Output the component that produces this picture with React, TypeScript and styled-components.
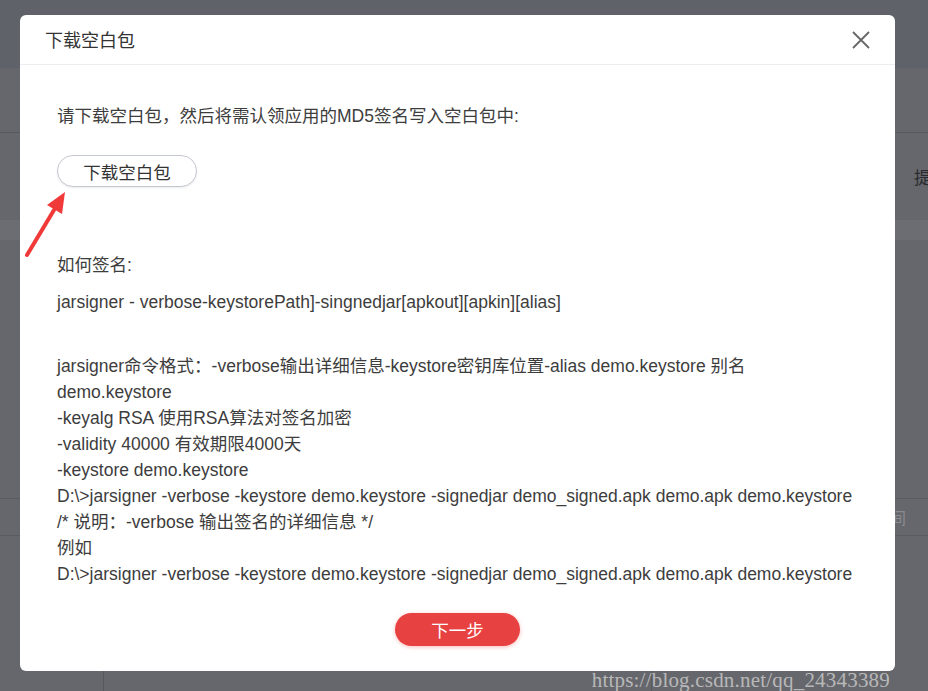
import React from "react";
import styled, { createGlobalStyle } from "styled-components";

const GlobalStyle = createGlobalStyle`
  html, body {
    margin: 0;
    padding: 0;
    width: 928px;
    height: 691px;
    overflow: hidden;
    background: #66676c;
    font-family: "Liberation Sans", "Noto Sans CJK SC", sans-serif;
  }
`;

const Page = styled.div`
  position: relative;
  width: 928px;
  height: 691px;
  display: flex;
  flex-direction: column;
  background: #66676c;
  overflow: hidden;
`;

const TopBand = styled.div`
  height: 68px;
  background: #60626a;
`;

const SubBar = styled.div`
  height: 64px;
  border-bottom: 1px solid #58595d;
`;

const ToolRow = styled.div`
  height: 87px;
  display: flex;
  justify-content: flex-end;
  align-items: center;
  font-size: 17px;
  color: #2a2b2e;
`;

const ToolText = styled.span`
  width: 14px;
  overflow: hidden;
  white-space: nowrap;
`;

const Band = styled.div`
  height: 20px;
  background: #6b6d73;
`;

const Spacer = styled.div`
  height: 258px;
`;

const HeadRow = styled.div`
  height: 36px;
  border-top: 1px solid #5a5b5f;
  border-bottom: 1px solid #5a5b5f;
  display: flex;
  justify-content: flex-end;
  align-items: center;
  font-size: 16px;
  color: #8a8b8f;
  padding-right: 22px;
`;

const BottomRow = styled.div`
  flex: 1;
  display: flex;
`;

const BottomCell = styled.div<{ $w: number }>`
  width: ${(p) => p.$w}px;
  border-right: 1px solid #58595d;
`;

const Modal = styled.div`
  position: absolute;
  left: 20px;
  top: 15px;
  width: 875px;
  height: 656px;
  background: #fff;
  border-radius: 6px;
  display: flex;
  flex-direction: column;
  color: #333;
`;

const Header = styled.div`
  height: 49px;
  border-bottom: 1px solid #ebedf0;
  display: flex;
  align-items: center;
  justify-content: space-between;
  padding: 0 24px 0 25px;
`;

const Title = styled.div`
  font-size: 18px;
  color: #333;
  margin-top: -2px;
`;

const Close = styled.button`
  border: none;
  background: none;
  padding: 0;
  width: 20px;
  height: 20px;
  display: flex;
  align-items: center;
  justify-content: center;
  cursor: pointer;
`;

const Body = styled.div`
  flex: 1;
  display: flex;
  flex-direction: column;
  align-items: flex-start;
  padding: 38px 37px 25px;
  font-size: 17.5px;
  line-height: 26px;
  color: #3d3d3d;
`;

const Line = styled.div<{ $mt?: number }>`
  margin-top: ${(p) => p.$mt ?? 0}px;
  white-space: nowrap;
`;

const GhostButton = styled.button`
  margin-top: 26px;
  width: 140px;
  height: 32px;
  border-radius: 16px;
  border: 1px solid #c4c8d0;
  background: #fff;
  font-family: inherit;
  font-size: 17.5px;
  color: #333;
  box-shadow: 0 1px 2px rgba(0, 0, 0, 0.08);
  cursor: pointer;
`;

const Footer = styled.div`
  align-self: stretch;
  display: flex;
  justify-content: center;
  margin-top: 26px;
`;

const PrimaryButton = styled.button`
  width: 125px;
  height: 33px;
  border-radius: 17px;
  border: none;
  background: #e84141;
  color: #fff;
  font-family: inherit;
  font-size: 17.5px;
  box-shadow: 0 1px 4px rgba(232, 65, 65, 0.35);
  cursor: pointer;
`;

const Arrow = styled.svg`
  position: absolute;
  left: 22px;
  top: 188px;
`;

const Watermark = styled.div`
  position: absolute;
  right: 38px;
  bottom: 0px;
  font-family: "Liberation Serif", "DejaVu Serif", serif;
  font-size: 21px;
  letter-spacing: 0.2px;
  color: rgba(200, 200, 200, 0.85);
  line-height: 22px;
`;

const commandLines = [
  "jarsigner命令格式：-verbose输出详细信息-keystore密钥库位置-alias demo.keystore 别名",
  "demo.keystore",
  "-keyalg RSA 使用RSA算法对签名加密",
  "-validity 40000 有效期限4000天",
  "-keystore demo.keystore",
  "D:\\>jarsigner -verbose -keystore demo.keystore -signedjar demo_signed.apk demo.apk demo.keystore",
  "/* 说明：-verbose 输出签名的详细信息 */",
  "例如",
  "D:\\>jarsigner -verbose -keystore demo.keystore -signedjar demo_signed.apk demo.apk demo.keystore",
];

export default function App() {
  return (
    <>
      <GlobalStyle />
      <Page>
        <TopBand />
        <SubBar />
        <ToolRow>
          <ToolText>提</ToolText>
        </ToolRow>
        <Band />
        <Spacer />
        <HeadRow>时间</HeadRow>
        <BottomRow>
          <BottomCell $w={103} />
          <BottomCell $w={547} />
        </BottomRow>

        <Modal>
          <Header>
            <Title>下载空白包</Title>
            <Close aria-label="close">
              <svg width="18" height="18" viewBox="0 0 18 18">
                <path d="M1 1L17 17M17 1L1 17" stroke="#666" strokeWidth="1.8" />
              </svg>
            </Close>
          </Header>
          <Body>
            <Line>请下载空白包，然后将需认领应用的MD5签名写入空白包中:</Line>
            <GhostButton>下载空白包</GhostButton>
            <Line $mt={65}>如何签名:</Line>
            <Line $mt={11}>jarsigner - verbose-keystorePath]-singnedjar[apkout][apkin][alias]</Line>
            <Line $mt={38}>
              {commandLines.map((t, i) => (
                <div key={i}>{t}</div>
              ))}
            </Line>
            <Footer>
              <PrimaryButton>下一步</PrimaryButton>
            </Footer>
          </Body>
        </Modal>

        <Arrow width="50" height="72" viewBox="0 0 50 72">
          <path d="M5 67L32 22" stroke="#f03a3a" strokeWidth="4" strokeLinecap="round" />
          <path d="M43 4L40 26L25 17Z" fill="#f03a3a" />
        </Arrow>

        <Watermark>https://blog.csdn.net/qq_24343389</Watermark>
      </Page>
    </>
  );
}
